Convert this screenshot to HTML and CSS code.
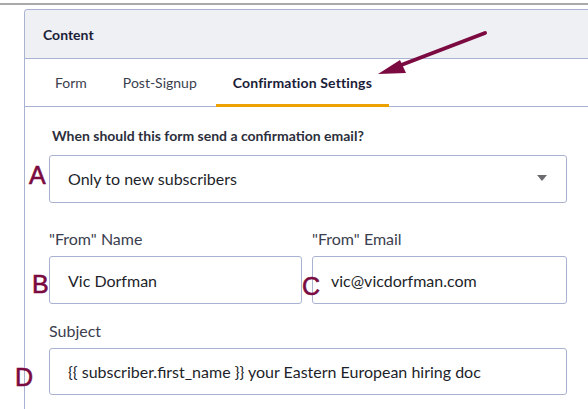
FILE: index.html
```html
<!DOCTYPE html>
<html>
<head>
<meta charset="utf-8">
<link rel="stylesheet" href="styles.css">
</head>
<body>
<div class="topline"></div>
<div class="panel">
  <div class="panel-header">Content</div>
  <div class="tabs">
    <div class="tab">Form</div>
    <div class="tab">Post-Signup</div>
    <div class="tab active">Confirmation Settings</div>
  </div>
  <div class="panel-body">
    <div class="question">When should this form send a confirmation email?</div>
    <div class="select">
      <span>Only to new subscribers</span>
      <span class="caret"></span>
    </div>
    <div class="row">
      <div class="field">
        <div class="label">"From" Name</div>
        <div class="input">Vic Dorfman</div>
      </div>
      <div class="field">
        <div class="label">"From" Email</div>
        <div class="input">vic@vicdorfman.com</div>
      </div>
    </div>
    <div class="field subject">
      <div class="label">Subject</div>
      <div class="input">{{ subscriber.first_name }} your Eastern European hiring doc</div>
    </div>
  </div>
</div>
<span class="mark mark-a">A</span>
<span class="mark mark-b">B</span>
<span class="mark mark-c">C</span>
<span class="mark mark-d">D</span>
<svg class="arrow" width="588" height="409" viewBox="0 0 588 409">
  <line x1="485" y1="33" x2="396" y2="67" stroke="#7a0a40" stroke-width="4" stroke-linecap="round"/>
  <polygon points="378,74 400,60 406,73" fill="#7a0a40"/>
</svg>
</body>
</html>
```
FILE: styles.css
```css
html, body {
  margin: 0;
  padding: 0;
  background: #ffffff;
  overflow: hidden;
  width: 588px;
  height: 409px;
}
body {
  position: relative;
  font-family: Lato, "Liberation Sans", sans-serif;
  color: #222533;
}
.topline {
  height: 2px;
  margin-top: 3px;
  background: #a9a9a9;
}
.panel {
  margin-top: 4px;
  margin-left: 24px;
  width: 563px;
  height: 399px;
  border-top: 1px solid #aab2d2;
  border-left: 1px solid #aab2d2;
  border-radius: 4px 0 0 0;
  background: #fff;
}
.panel-header {
  height: 48px;
  background: #eff0f4;
  border-bottom: 1px solid #aab2d2;
  border-radius: 4px 0 0 0;
  display: flex;
  align-items: center;
  padding-left: 18px;
  font-weight: 700;
  font-size: 14px;
  color: #1b2038;
}
.tabs {
  display: flex;
  height: 47px;
  border-bottom: 1px solid #aab2d2;
  padding-left: 13px;
  gap: 2px;
}
.tab {
  display: flex;
  align-items: center;
  padding: 0 17px;
  font-size: 14px;
  color: #3b3e4e;
  box-sizing: border-box;
  height: 48px;
  border-bottom: 3px solid transparent;
  padding-top: 1px;
}
.tab.active {
  font-weight: 700;
  color: #1b2038;
  border-bottom-color: #eda100;
  letter-spacing: 0.15px;
}
.panel-body {
  padding: 0 0 0 24px;
  width: 518px;
}
.question {
  font-size: 14px;
  font-weight: 700;
  color: #2c2f3c;
  padding-left: 3px;
  margin-top: 21px;
  height: 16px;
  line-height: 16px;
}
.select {
  margin-top: 11px;
  height: 44px;
  border: 1px solid #aab2d2;
  border-radius: 3px;
  display: flex;
  align-items: center;
  justify-content: space-between;
  padding: 0 19px 2px 18px;
  font-size: 16px;
  color: #1d1f2a;
}
.caret {
  width: 0;
  height: 0;
  border-left: 5px solid transparent;
  border-right: 5px solid transparent;
  border-top: 6px solid #6b6b70;
}
.row {
  display: grid;
  grid-template-columns: 253px 255px;
  gap: 10px;
  margin-top: 27px;
}
.label {
  font-size: 16px;
  color: #3b3e4e;
  height: 18px;
  line-height: 18px;
}
.input {
  margin-top: 8px;
  height: 46px;
  border: 1px solid #aab2d2;
  border-radius: 3px;
  display: flex;
  align-items: center;
  padding-left: 18px;
  font-size: 16px;
  color: #1d1f2a;
}
.subject {
  margin-top: 18px;
}
.subject .input {
  height: 45px;
}
.mark {
  position: absolute;
  font-family: "Liberation Sans", sans-serif;
  font-size: 25px;
  color: #7a0a40;
  line-height: 1;
  -webkit-text-stroke: 0.6px #7a0a40;
}
.mark-a { left: 29px; top: 163px; }
.mark-b { left: 32px; top: 272px; }
.mark-c { left: 302px; top: 274px; }
.mark-d { left: 15px; top: 365px; }
.arrow {
  position: absolute;
  left: 0;
  top: 0;
  pointer-events: none;
}
```
